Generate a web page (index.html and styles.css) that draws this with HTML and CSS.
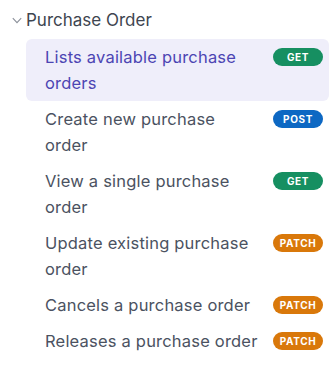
FILE: index.html
```html
<!DOCTYPE html>
<html lang="en">
<head>
<meta charset="utf-8">
<meta name="viewport" content="width=device-width, initial-scale=1">
<title>Purchase Order</title>
<link rel="stylesheet" href="styles.css">
</head>
<body>

<div class="navGroup">
  <div class="groupTitle">
    <svg class="chevron" width="10" height="7" viewBox="0 0 10 7">
      <path d="M0.8 1.2 L5 5.6 L9.2 1.2" fill="none" stroke="#8a8f99" stroke-width="1.1"/>
    </svg>
    <span>Purchase Order</span>
  </div>

  <ul class="opList">
    <li class="opItem active">
      <span class="opName">Lists available purchase orders</span>
      <span class="badge get">GET</span>
    </li>
    <li class="opItem">
      <span class="opName">Create new purchase order</span>
      <span class="badge post">POST</span>
    </li>
    <li class="opItem">
      <span class="opName">View a single purchase order</span>
      <span class="badge get">GET</span>
    </li>
    <li class="opItem">
      <span class="opName">Update existing purchase order</span>
      <span class="badge patch">PATCH</span>
    </li>
    <li class="opItem">
      <span class="opName">Cancels a purchase order</span>
      <span class="badge patch">PATCH</span>
    </li>
    <li class="opItem">
      <span class="opName">Releases a purchase order</span>
      <span class="badge patch">PATCH</span>
    </li>
  </ul>
</div>

</body>
</html>
```

FILE: styles.css
```css
body {
    margin: 0;
    background-color: white;
    font-family: Inter, "Noto Sans", sans-serif;
}

.navGroup {
    padding: 7px 6px 0 12px;
}

.groupTitle {
    display: flex;
    align-items: center;
    gap: 4px;
    height: 26px;
    margin-bottom: 6px;
    font-size: 17px;
    color: #3e4550;
}

.chevron {
    margin-top: 1px;
}

.opList {
    list-style: none;
    margin: 0;
    padding: 0 0 0 14px;
}

.opItem {
    display: flex;
    align-items: flex-start;
    gap: 12px;
    padding: 5px 6px 5px 19px;
    font-size: 16.5px;
    letter-spacing: 0.2px;
    line-height: 26px;
    color: #4b5261;
    border-radius: 6px;
}

.opItem.active {
    background-color: #efeefa;
    color: #4c45b3;
}

.opName {
    flex: 1;
}

.badge {
    flex: none;
    width: 50px;
    height: 18px;
    margin-top: 4px;
    border-radius: 9px;
    color: white;
    font-size: 10px;
    font-weight: 700;
    letter-spacing: 0.6px;
    line-height: 18px;
    text-align: center;
}

.get {
    background-color: #168f61;
}

.post {
    background-color: #0d68c3;
}

.patch {
    background-color: #d9780a;
}
```
